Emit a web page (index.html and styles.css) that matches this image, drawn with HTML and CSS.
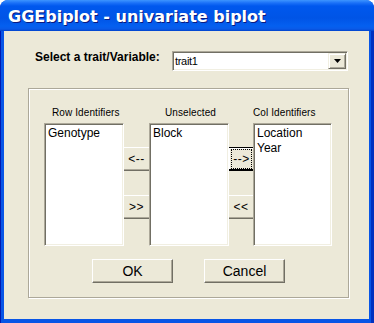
FILE: index.html
```html
<!DOCTYPE html>
<html>
<head>
<meta charset="utf-8">
<link rel="stylesheet" href="styles.css">
</head>
<body>
<div class="window">
  <div class="titlebar"><span class="title">GGEbiplot - univariate biplot</span></div>
  <div class="client">
    <div class="select-row">
      <span class="select-label">Select a trait/Variable:</span>
      <div class="combo">
        <span class="combo-text">trait1</span>
        <div class="combo-btn">
          <svg width="7" height="4" viewBox="0 0 7 4"><path d="M0 0h7L3.5 4z" fill="#000"/></svg>
        </div>
      </div>
    </div>
    <div class="group">
      <div class="lists">
        <div class="cap cap-row">Row Identifiers</div>
        <div></div>
        <div class="cap cap-unsel">Unselected</div>
        <div></div>
        <div class="cap cap-col">Col Identifiers</div>

        <div class="listbox"><div>Genotype</div></div>
        <div class="mover">
          <div class="mbtn">&lt;--</div>
          <div class="mbtn">&gt;&gt;</div>
        </div>
        <div class="listbox"><div>Block</div></div>
        <div class="mover">
          <div class="mbtn focus"><span class="focus-ring">--&gt;</span></div>
          <div class="mbtn">&lt;&lt;</div>
        </div>
        <div class="listbox"><div>Location</div><div>Year</div></div>
      </div>
      <div class="actions">
        <div class="btn">OK</div>
        <div class="btn">Cancel</div>
      </div>
    </div>
  </div>
</div>
</body>
</html>
```
FILE: styles.css
```css
html, body {
  margin: 0;
  background: #ffffff;
}
.window {
  width: 374px;
  height: 323px;
  display: flex;
  flex-direction: column;
  background: linear-gradient(to right, #0019b0 0, #0019b0 1px, #0855e6 1px, #0855e6 371px, #0031c0 371px);
  border-radius: 8px 8px 0 0;
  overflow: hidden;
  font-family: "Liberation Sans", Arial, sans-serif;
  color: #000;
}
.titlebar {
  height: 31px;
  flex: none;
  display: flex;
  align-items: center;
  padding-left: 8px;
  padding-top: 2px;
  box-sizing: border-box;
  background: linear-gradient(#3d95ff 0, #1a70f8 3px, #0058ee 6px, #0054e6 18px, #0460f0 26px, #0a5ae8 29px, #0043cc 31px);
}
.title {
  color: #fff;
  font: bold 16px "DejaVu Sans", sans-serif;
  text-shadow: 1px 1px 0 #0a1a80;
  white-space: nowrap;
}
.client {
  flex: 1;
  margin: 0 5px 4px 4px;
  background: #ece9d8;
  display: flex;
  flex-direction: column;
}
.select-row {
  display: flex;
  align-items: flex-start;
  padding: 19px 0 0 31px;
}
.select-label {
  width: 137px;
  font-weight: bold;
  font-size: 12px;
  line-height: 14px;
}
.combo {
  margin-top: 1px;
  width: 176px;
  height: 20px;
  box-sizing: border-box;
  background: #fff;
  border-top: 1px solid #aca899;
  border-left: 1px solid #aca899;
  border-right: 1px solid #fff;
  border-bottom: 1px solid #fff;
  box-shadow: inset 1px 1px 0 #716f64, inset -1px -1px 0 #f1efe2;
  display: flex;
  align-items: center;
  padding: 1px 1px 1px 2px;
}
.combo-text {
  flex: 1;
  font-size: 11px;
  line-height: 16px;
  letter-spacing: -0.3px;
}
.combo-btn {
  width: 18px;
  height: 16px;
  box-sizing: border-box;
  background: #ece9d8;
  border-top: 1px solid #f1efe2;
  border-left: 1px solid #f1efe2;
  border-right: 1px solid #716f64;
  border-bottom: 1px solid #716f64;
  box-shadow: inset 1px 1px 0 #fff, inset -1px -1px 0 #aca899;
  display: flex;
  align-items: center;
  justify-content: center;
}
.combo-btn svg {
  display: block;
}
.group {
  margin: 17px 0 0 24px;
  width: 321px;
  height: 210px;
  box-sizing: border-box;
  border: 1px solid #aca899;
  box-shadow: inset 1px 1px 0 #fff, 1px 1px 0 #fff;
  padding: 18px 0 0 15px;
  display: flex;
  flex-direction: column;
}
.lists {
  display: grid;
  grid-template-columns: 80px 25px 80px 24px 79px;
  grid-template-rows: 12px 123px;
  row-gap: 4px;
}
.cap {
  font-size: 10px;
  line-height: 12px;
  white-space: nowrap;
  letter-spacing: 0.1px;
}
.cap-row { padding-left: 8px; }
.cap-unsel { padding-left: 16px; }
.cap-col { padding-left: 0; }
.listbox {
  box-sizing: border-box;
  background: #fff;
  border-top: 1px solid #aca899;
  border-left: 1px solid #aca899;
  border-right: 1px solid #fff;
  border-bottom: 1px solid #fff;
  box-shadow: inset 1px 1px 0 #716f64, inset -1px -1px 0 #f1efe2;
  padding: 2px 2px 0 3px;
  font-size: 12px;
  line-height: 15px;
}
.listbox + .mover, .mover + .listbox { }
.mover {
  display: flex;
  flex-direction: column;
  gap: 24px;
  padding-top: 24px;
}
.mbtn {
  height: 24px;
  box-sizing: border-box;
  background: #ece9d8;
  border-top: 1px solid #fff;
  border-bottom: 1px solid #716f64;
  box-shadow: inset 0 -1px 0 #aca899;
  display: flex;
  align-items: center;
  justify-content: center;
  font-size: 12px;
  letter-spacing: 0.5px;
}
.mbtn.focus {
  border-top: 1px solid #000;
  border-bottom: 2px solid #000;
  box-shadow: inset 1px 1px 0 #fff;
  align-items: stretch;
  padding: 1px 1px 0 2px;
}
.focus-ring {
  flex: 1;
  border: 1px dotted #000;
  display: flex;
  align-items: center;
  justify-content: center;
}
.actions {
  display: flex;
  justify-content: center;
  gap: 31px;
  margin-top: 13px;
  padding-right: 15px;
}
.btn {
  width: 81px;
  height: 24px;
  box-sizing: border-box;
  background: #ece9d8;
  border-top: 1px solid #fff;
  border-left: 1px solid #fff;
  border-right: 1px solid #716f64;
  border-bottom: 1px solid #716f64;
  box-shadow: inset -1px -1px 0 #aca899;
  display: flex;
  align-items: center;
  justify-content: center;
  font-size: 14px;
}
```
